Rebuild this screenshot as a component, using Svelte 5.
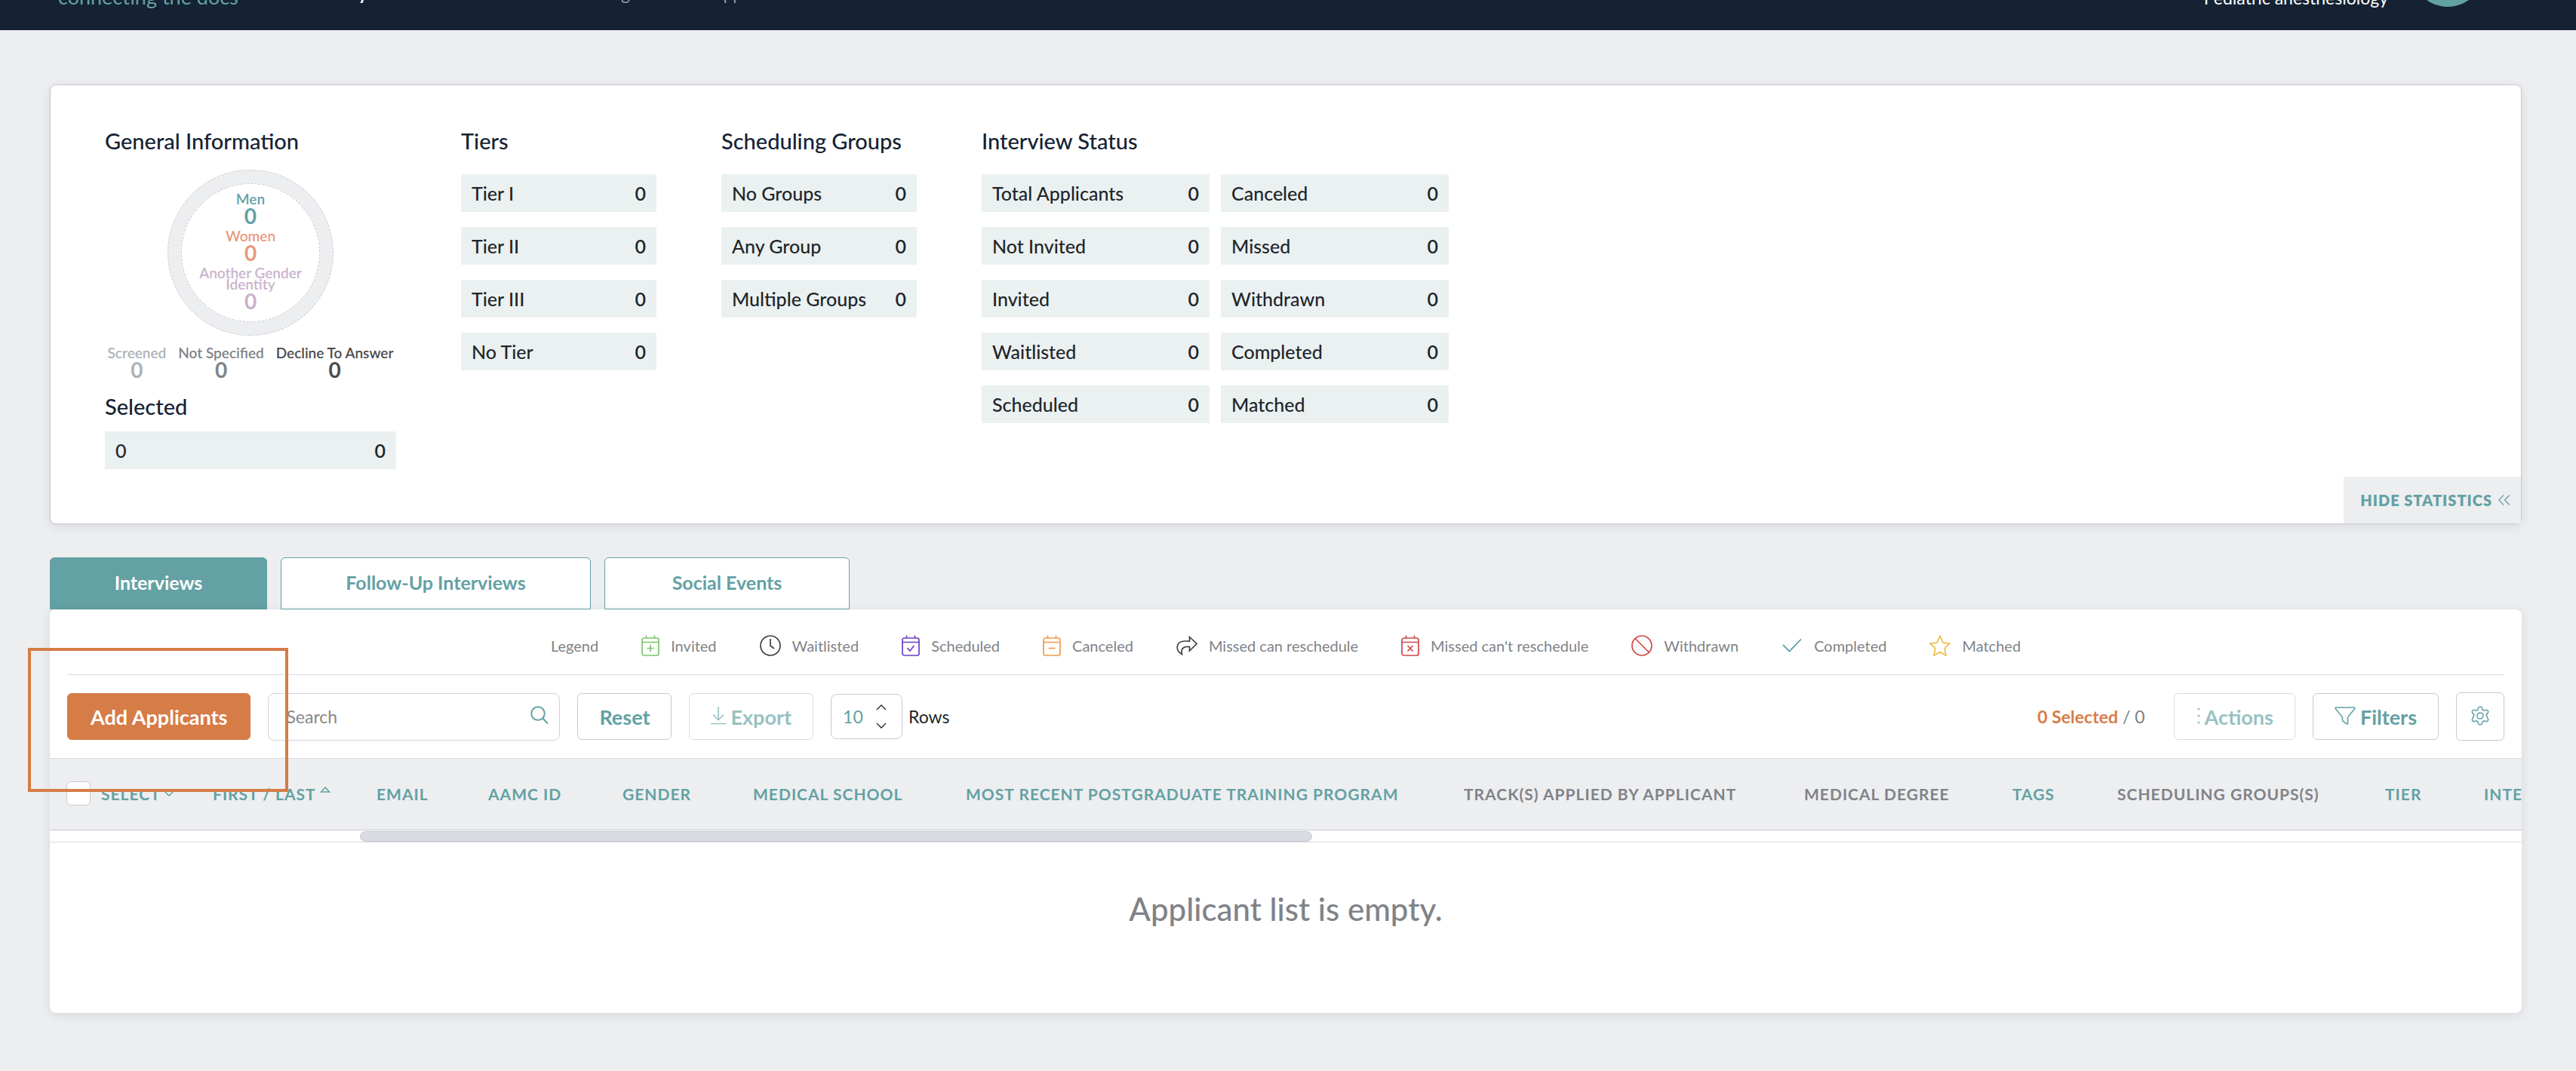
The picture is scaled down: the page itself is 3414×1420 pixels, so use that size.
<script>
	const nav = ["Surveys", "Calendar", "Messages", "Applications"]

	const genders = [
		{ label: "Men", count: 0, tone: "teal" },
		{ label: "Women", count: 0, tone: "peach" },
		{ label: "Another Gender Identity", count: 0, tone: "lilac" },
	]

	const undisclosed = [
		{ label: "Screened", count: 0, tone: "silver" },
		{ label: "Not Specified", count: 0, tone: "grey" },
		{ label: "Decline To Answer", count: 0, tone: "charcoal" },
	]

	const groups = [
		{
			title: "Tiers",
			lists: [["Tier I", "Tier II", "Tier III", "No Tier"]],
		},
		{
			title: "Scheduling Groups",
			lists: [["No Groups", "Any Group", "Multiple Groups"]],
		},
		{
			title: "Interview Status",
			wide: true,
			lists: [
				["Total Applicants", "Not Invited", "Invited", "Waitlisted", "Scheduled"],
				["Canceled", "Missed", "Withdrawn", "Completed", "Matched"],
			],
		},
	]

	const tabs = [
		{ name: "Interviews", size: "small" },
		{ name: "Follow-Up Interviews", size: "large" },
		{ name: "Social Events", size: "medium" },
	]
	let activeTab = $state("Interviews")

	const legend = [
		{ label: "Invited", icon: "plus", color: "#7ac66c" },
		{ label: "Waitlisted", icon: "clock", color: "#3f4144" },
		{ label: "Scheduled", icon: "tick", color: "#6a3fc0" },
		{ label: "Canceled", icon: "minus", color: "#f09a4a" },
		{ label: "Missed can reschedule", icon: "forward", color: "#3f4144" },
		{ label: "Missed can't reschedule", icon: "cross", color: "#d04848" },
		{ label: "Withdrawn", icon: "ban", color: "#d04848" },
		{ label: "Completed", icon: "check", color: "#4d9a9b" },
		{ label: "Matched", icon: "star", color: "#edbd4b" },
	]

	// What goes inside the calendar outline
	const calendarMarks = {
		plus: "M12 13v9M7.500 17.500h9",
		tick: "M7.500 17l3.500 4 5.500-7",
		minus: "M7.500 17.500h9",
		cross: "M8.500 14l7 7.500M15.500 14l-7 7.500",
	}

	const columns = [
		{ name: "Email", width: 148, sortable: true },
		{ name: "AAMC ID", width: 178, sortable: true },
		{ name: "Gender", width: 173, sortable: true },
		{ name: "Medical School", width: 282, sortable: true },
		{ name: "Most Recent Postgraduate Training Program", width: 660, sortable: true },
		{ name: "Track(s) Applied by Applicant", width: 451 },
		{ name: "Medical Degree", width: 276 },
		{ name: "Tags", width: 139, sortable: true },
		{ name: "Scheduling Groups(s)", width: 355 },
		{ name: "Tier", width: 131, sortable: true },
		{ name: "Interview Status", width: 300, sortable: true },
	]

	let search = $state("")
	let rows = $state("10")
</script>

{#snippet count(label, value)}
	<li><span>{label}</span><strong>{value}</strong></li>
{/snippet}

{#snippet person(item)}
	<div class="person {item.tone}">
		<span>{item.label}</span>
		<strong>{item.count}</strong>
	</div>
{/snippet}

<header class="topbar">
	<a class="tagline" href="#home">connecting the docs</a>
	<nav>
		{#each nav as item, i}
			<a href="#{item}" class:current={i === 0}>{item}</a>
		{/each}
	</nav>
	<span class="program">Pediatric anesthesiology</span>
	<span class="avatar"></span>
</header>

<main>
	<section class="card statistics">
		<div class="stats">
			<div class="general">
				<h2>General Information</h2>
				<div class="ring">
					<div class="hole">
						{#each genders as item}
							{@render person(item)}
						{/each}
					</div>
				</div>
				<div class="undisclosed">
					{#each undisclosed as item}
						{@render person(item)}
					{/each}
				</div>
				<h2>Selected</h2>
				<ul class="selected">
					{@render count("0", 0)}
				</ul>
			</div>

			{#each groups as group}
				<div>
					<h2>{group.title}</h2>
					<div class="lists" class:wide={group.wide}>
						{#each group.lists as list}
							<ul>
								{#each list as label}
									{@render count(label, 0)}
								{/each}
							</ul>
						{/each}
					</div>
				</div>
			{/each}
		</div>
		<button class="hide">
			Hide Statistics
			<svg width="16" height="14" viewBox="0 0 16 14">
				<path d="M7 .5L.800 7 7 13.500M15 .5L8.500 7l6.500 6.500" />
			</svg>
		</button>
	</section>

	<div class="tabs">
		{#each tabs as tab}
			<button
				class={tab.size}
				class:active={activeTab === tab.name}
				onclick={() => (activeTab = tab.name)}>
				{tab.name}
			</button>
		{/each}
	</div>

	<section class="card applicants">
		<div class="legend">
			<span>Legend</span>
			{#each legend as item}
				<span class="key" style="--tint: {item.color}">
					{#if calendarMarks[item.icon]}
						<svg width="24" height="28" viewBox="0 0 24 28">
							<rect x="1" y="4" width="22" height="23" rx="2.500" />
							<path d="M1 9.500h22M6.500 .5V4M17.500 .5V4" />
							<path d={calendarMarks[item.icon]} />
						</svg>
					{:else}
						<svg width="28" height="28" viewBox="0 0 28 28">
							{#if item.icon === "clock"}
								<circle cx="14" cy="14" r="13" />
								<path d="M14 5v9l5 4" />
							{:else if item.icon === "forward"}
								<path
									d="M17.500 2.500l9.500 9L17.500 21v-5.500c-6-.5-10 1-10.500 5.500 0 1.500.2 2.800.5 4.500C4 23.500 1 20 1.200 16 1.600 10.500 6 8 11 8c2 0 4.500 0 6.500.2z" />
							{:else if item.icon === "ban"}
								<circle cx="14" cy="14" r="13" />
								<path d="M5 4.500l18.500 18.500" />
							{:else if item.icon === "check"}
								<path d="M2 13l8.500 8.500L26 5.500" />
							{:else}
								<path
									d="M14 1.500l4 8.700 9 1-6.800 6.300L22 27l-8-4.500L6 27l1.800-9.500L1 11.200l9-1z" />
							{/if}
						</svg>
					{/if}
					{item.label}
				</span>
			{/each}
		</div>

		<div class="toolbar">
			<button class="btn primary">Add Applicants</button>
			<label class="search">
				<input type="text" placeholder="Search" aria-label="Search" bind:value={search} />
				<svg width="24" height="28" viewBox="0 0 24 28">
					<circle cx="10" cy="10" r="8.800" />
					<path d="M16 16l7 7.500" />
				</svg>
			</label>
			<button class="btn" onclick={() => (search = "")}>Reset</button>
			<button class="btn" disabled>
				<svg width="20" height="26" viewBox="0 0 20 26">
					<path d="M10 0v17M3 10.500l7 7 7-7M0 22.500h20" />
				</svg>
				Export
			</button>
			<label class="rows">
				<span class="picker">
					<select bind:value={rows}>
						<option>10</option>
						<option>25</option>
						<option>50</option>
					</select>
					<svg width="14" height="32" viewBox="0 0 14 32">
						<path d="M1 7l6-6 6 6M1 25l6 6 6-6" />
					</svg>
				</span>
				Rows
			</label>

			<span class="total"><strong>0 Selected</strong> / 0</span>
			<button class="btn" disabled>
				<svg class="dots" width="6" height="26" viewBox="0 0 6 26">
					<circle cx="4" cy="3" r="1.500" />
					<circle cx="4" cy="12" r="1.500" />
					<circle cx="4" cy="21" r="1.500" />
				</svg>
				Actions
			</button>
			<button class="btn">
				<svg width="28" height="26" viewBox="0 0 28 26">
					<path
						d="M2 1h24c1 0 1.200 1 .6 1.800L17.500 14v8c0 1.200-.8 1.300-1.500.7L11.500 19.500c-.6-.5-1-1-1-2V14L1.400 2.800C.8 2 1 1 2 1z" />
				</svg>
				Filters
			</button>
			<button class="btn settings" aria-label="Settings">
				<svg width="28" height="28" viewBox="0 0 28 28">
					<path
						d="M11.500 2.800c.8-2.400 4.200-2.400 5 0l.4 1.400c.4 1.400 1.900 2.200 3.300 1.700l1.300-.5c2.500-.8 4.200 2 2.500 4l-.9 1c-1 1.100-1 2.900 0 4l.9 2c1.700 2 0 4.800-2.500 4l-1.300-.4c-1.400-.4-2.900.4-3.300 1.800l-.4 1.400c-.8 2.400-4.200 2.400-5 0l-.4-1.400c-.4-1.400-1.900-2.200-3.300-1.800l-1.300.4c-2.500.8-4.200-2-2.500-4l.9-2c1-1.100 1-2.900 0-4l-.9-1c-1.700-2 0-4.800 2.500-4l1.300.5c1.400.5 2.900-.3 3.300-1.700z" />
					<circle cx="14" cy="13" r="4" />
				</svg>
			</button>
		</div>

		<div class="scroller">
			<table>
				<colgroup>
					<col style="width: 216px" />
					<col style="width: 217px" />
					{#each columns as column}
						<col style="width: {column.width}px" />
					{/each}
				</colgroup>
				<thead>
					<tr>
						<th>
							<div class="select-all">
								<input type="checkbox" aria-label="Select all applicants" />
								<a href="#select">Select</a>
								<svg width="14" height="8" viewBox="0 0 14 8">
									<path d="M1 1l6 6 6-6" />
								</svg>
							</div>
						</th>
						<th>
							<a href="#name">
								First / Last
								<svg class="sorted" width="14" height="8" viewBox="0 0 14 8">
									<path d="M7 1l5.500 6h-11z" />
								</svg>
							</a>
						</th>
						{#each columns as column}
							<th>
								{#if column.sortable}
									<a href="#{column.name}">{column.name}</a>
								{:else}
									{column.name}
								{/if}
							</th>
						{/each}
					</tr>
				</thead>
			</table>
		</div>
		<div class="scrollbar"><div class="thumb"></div></div>
		<p class="empty">Applicant list is empty.</p>

		<div class="highlight"></div>
	</section>
</main>

<style>
	:global(body) {
		background: #edeef0;
		color: #212529;
		font-family: Lato, "Liberation Sans", sans-serif;
		font-size: 25px;
		overflow-x: hidden;
	}

	h2,
	p,
	ul {
		margin: 0;
		padding: 0;
	}

	a {
		color: inherit;
		text-decoration: none;
	}

	button,
	input,
	select {
		font: inherit;
		color: inherit;
		margin: 0;
		box-sizing: border-box;
	}

	button {
		cursor: pointer;
	}

	svg {
		fill: none;
		stroke: currentColor;
		stroke-width: 2;
		flex: none;
	}

	/* the bar is scrolled almost out of the window */
	.topbar {
		height: 124px;
		margin-top: -84px;
		padding: 0 122px 0 77px;
		box-sizing: border-box;
		display: flex;
		align-items: flex-end;
		background: #152233;
		color: #fff;
		line-height: 30px;
	}

	.tagline {
		width: 340px;
		padding-bottom: 29px;
		color: #63a1a4;
		font-size: 27px;
	}

	nav {
		display: flex;
		gap: 86px;
		flex: 1;
		padding-bottom: 34px;
		color: #8d97a3;
		font-size: 23px;
	}

	.current {
		color: #fff;
		font-weight: 700;
	}

	.program {
		padding-bottom: 28px;
		font-size: 23px;
	}

	.avatar {
		width: 96px;
		height: 96px;
		margin: 0 0 31px 31px;
		border-radius: 50%;
		background: #63a1a4;
	}

	main {
		padding: 72px 72px 76px 66px;
	}

	.card {
		background: #fff;
		border-radius: 8px;
		box-shadow: 0 3px 14px rgba(21, 34, 51, 0.1);
	}

	.statistics {
		display: flex;
		flex-direction: column;
		border: 1px solid #c7cad0;
		padding-top: 57px;
	}

	.stats {
		display: flex;
		gap: 86px;
		padding: 0 72px 10px;
	}

	h2 {
		color: #152233;
		font-size: 29px;
		font-weight: 500;
		line-height: 34px;
	}

	.general {
		width: 386px;
	}

	.ring {
		width: 220px;
		height: 220px;
		margin: 21px auto 15px;
		padding: 17px;
		box-sizing: border-box;
		border: 1px dashed #c7cad0;
		border-radius: 50%;
		background: #edeef0;
	}

	.hole {
		height: 100%;
		box-sizing: border-box;
		display: flex;
		flex-direction: column;
		align-items: center;
		justify-content: center;
		gap: 4px;
		border: 1px dashed #c7cad0;
		border-radius: 50%;
		background: #fff;
	}

	.person {
		display: flex;
		flex-direction: column;
		align-items: center;
		max-width: 160px;
		text-align: center;
		font-size: 19px;
		font-weight: 600;
		line-height: 15px;
	}

	.person strong {
		font-size: 28px;
		font-weight: 700;
		line-height: 30px;
	}

	.teal {
		color: #63a1a4;
	}

	.peach {
		color: #e99a7c;
	}

	.lilac {
		color: #c9b3cc;
	}

	.silver {
		color: #acb1b9;
	}

	.grey {
		color: #808388;
	}

	.charcoal {
		color: #4b4c4f;
	}

	.undisclosed {
		display: flex;
		justify-content: center;
		gap: 16px;
		margin-bottom: 17px;
	}

	ul {
		display: flex;
		flex-direction: column;
		gap: 20px;
		width: 259px;
		list-style: none;
	}

	ul.selected {
		width: auto;
		margin-top: 16px;
	}

	.wide ul {
		width: 302px;
	}

	.lists {
		display: flex;
		gap: 15px;
		margin-top: 27px;
	}

	li {
		display: flex;
		justify-content: space-between;
		padding: 0 14px;
		background: #ebf1f1;
		font-weight: 500;
		line-height: 50px;
	}

	li strong {
		font-weight: 600;
	}

	.hide {
		display: flex;
		align-items: center;
		align-self: flex-end;
		gap: 8px;
		height: 62px;
		padding: 0 14px 0 22px;
		border: 0;
		background: #edeef0;
		color: #63a1a4;
		font-size: 20px;
		font-weight: 800;
		letter-spacing: 1px;
		text-transform: uppercase;
	}

	.hide svg {
		stroke-width: 1.3;
	}

	.tabs {
		display: flex;
		gap: 18px;
		margin-top: 44px;
	}

	.tabs button {
		height: 69px;
		padding-bottom: 4px;
		border: 1px solid #63a1a4;
		border-radius: 6px 6px 0 0;
		background: #fff;
		color: #63a1a4;
		font-weight: 700;
	}

	.tabs .active {
		background: #63a1a4;
		color: #fff;
	}

	.small {
		width: 288px;
	}

	.medium {
		width: 325px;
	}

	.large {
		width: 411px;
	}

	.applicants {
		position: relative;
	}

	.legend {
		display: flex;
		justify-content: center;
		align-items: center;
		gap: 57px;
		height: 87px;
		margin: 0 23px;
		padding-top: 10px;
		box-sizing: border-box;
		border-bottom: 1px solid #d9dbe0;
		color: #808388;
		font-size: 20px;
	}

	.key {
		display: flex;
		align-items: center;
		gap: 15px;
	}

	.key svg {
		color: var(--tint);
		stroke-width: 1.7;
	}

	.toolbar {
		display: flex;
		align-items: center;
		gap: 23px;
		height: 110px;
		padding: 0 23px;
	}

	.btn {
		display: flex;
		align-items: center;
		gap: 6px;
		height: 62px;
		padding: 0 28px;
		border: 1px solid #c7cad0;
		border-radius: 6px;
		background: #fff;
		color: #63a1a4;
		font-size: 27px;
		font-weight: 700;
	}

	.btn:disabled {
		opacity: 0.65;
	}

	.btn.primary {
		padding: 0 30px;
		border-color: #d67c47;
		background: #d67c47;
		color: #fff;
	}

	.btn.settings {
		width: 64px;
		height: 64px;
		padding: 0;
		justify-content: center;
	}

	.btn svg {
		stroke-width: 1.6;
	}

	.btn .dots {
		fill: currentColor;
		stroke: none;
	}

	.search {
		display: flex;
		align-items: center;
		width: 387px;
		height: 63px;
		padding: 0 14px 0 23px;
		box-sizing: border-box;
		border: 1px solid #d0d4da;
		border-radius: 8px;
		color: #63a1a4;
		font-size: 23px;
	}

	.search input {
		flex: 1;
		min-width: 0;
		padding: 0;
		border: 0;
		outline: 0;
		background: none;
		color: #212529;
	}

	.search input::placeholder {
		color: #86888c;
		opacity: 1;
	}

	.rows {
		display: flex;
		align-items: center;
		gap: 8px;
		font-size: 23px;
	}

	.picker {
		display: flex;
		align-items: center;
		width: 95px;
		height: 60px;
		padding: 0 20px 0 15px;
		box-sizing: border-box;
		border: 1px solid #c7cad0;
		border-radius: 8px;
	}

	.picker svg {
		stroke-width: 1.3;
	}

	.rows select {
		flex: 1;
		min-width: 0;
		padding: 0;
		border: 0;
		outline: 0;
		appearance: none;
		background: none;
		color: #63a1a4;
	}

	.total {
		margin-left: auto;
		margin-right: 15px;
		color: #808388;
		font-size: 23px;
	}

	.total strong {
		color: #d67c47;
		font-weight: 700;
	}

	.scroller {
		overflow: hidden;
		border-top: 1px solid #d9dbe0;
		border-bottom: 1px solid #c7cad0;
		background: #edeef0;
	}

	table {
		width: 100%;
		table-layout: fixed;
		border-collapse: collapse;
	}

	th {
		height: 94px;
		padding: 0 0 2px;
		box-sizing: border-box;
		color: #808388;
		font-size: 21px;
		font-weight: 700;
		letter-spacing: 1px;
		text-align: left;
		text-transform: uppercase;
		white-space: nowrap;
	}

	th a {
		color: #63a1a4;
	}

	th svg {
		color: #63a1a4;
		stroke-width: 1.5;
	}

	.sorted {
		vertical-align: 10px;
	}

	.select-all {
		display: flex;
		align-items: center;
		padding-left: 22px;
	}

	.select-all input {
		appearance: none;
		width: 32px;
		height: 32px;
		margin-right: 14px;
		border: 1px solid #c7cad0;
		border-radius: 6px;
		background: #fff;
	}

	.select-all svg {
		margin-left: 4px;
	}

	.scrollbar {
		padding-top: 1px;
		border-bottom: 1px solid #d9dbe0;
	}

	.thumb {
		width: 1262px;
		height: 14px;
		margin-left: 411px;
		box-sizing: border-box;
		border: 1px solid #c7cad0;
		border-radius: 7px;
		background: #d9dbe0;
	}

	.empty {
		padding: 63px 0 113px;
		color: #808388;
		font-size: 42px;
		font-weight: 500;
		line-height: 50px;
		text-align: center;
	}

	/* walkthrough frame around the add button */
	.highlight {
		position: absolute;
		top: 51px;
		left: -29px;
		width: 345px;
		height: 191px;
		box-sizing: border-box;
		border: 4px solid #d67c47;
		pointer-events: none;
	}
</style>
